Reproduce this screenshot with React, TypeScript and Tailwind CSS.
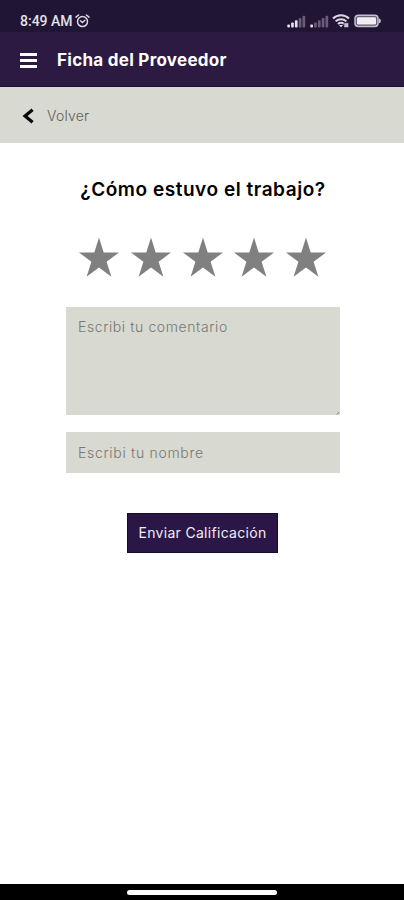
import { useState } from 'react';

const STARS = [1, 2, 3, 4, 5];

function SignalIcon({ active }: { active: number }) {
  return (
    <svg width="19" height="13" viewBox="0 0 19 13">
      {[0, 1, 2, 3, 4].map((i) => (
        <rect
          key={i}
          x={0.3 + i * 3.8}
          y={9.6 - i * 2.2}
          width="2.7"
          height={2.9 + i * 2.2}
          rx="0.9"
          fill={i < active ? '#e6e2ea' : '#6a5d79'}
        />
      ))}
    </svg>
  );
}

function AlarmIcon() {
  return (
    <svg
      width="15"
      height="14"
      viewBox="0 0 15 14"
      fill="none"
      stroke="#ddd8e2"
      strokeWidth="1.5"
      strokeLinecap="round"
    >
      <circle cx="7.5" cy="7.6" r="5" />
      <path d="M1 3.1 3.6 1M14 3.1 11.4 1" />
      <path d="M5.4 6.7 7.4 8.5 9.9 6.2" strokeWidth="1.3" />
    </svg>
  );
}

function WifiIcon() {
  return (
    <svg width="18" height="14" viewBox="0 0 18 14" fill="none" stroke="#ddd8e2">
      <path d="M1 4.6C5.5.2 12.5.2 17 4.6" strokeWidth="2.1" />
      <path d="M3.6 7.4c3-2.9 7.8-2.9 10.8 0" strokeWidth="2" />
      <path d="M6 10c1.7-1.6 4.3-1.6 6 0" strokeWidth="2" />
      <path d="M7 11h4L9 13.6z" fill="#ddd8e2" stroke="none" />
      <path d="M12 8.8h4.6v4.7H12z" fill="#c9c2d0" stroke="#20153a" strokeWidth=".5" />
    </svg>
  );
}

function BatteryIcon() {
  return (
    <svg width="28" height="14" viewBox="0 0 28 14">
      <rect x="1" y="1.2" width="23" height="11.2" rx="3.2" fill="#6a5d79" stroke="#c4bdcb" strokeWidth="1.5" />
      <rect x="3" y="3.2" width="19" height="7.2" rx="1.2" fill="#f0eef2" />
      <path d="M24.8 4.2c2.8.8 2.8 4.4 0 5.2z" fill="#c4bdcb" />
    </svg>
  );
}

export default function App() {
  const [rating, setRating] = useState(0);
  const [comment, setComment] = useState('');
  const [name, setName] = useState('');

  return (
    <div className="flex h-[900px] w-full flex-col bg-white font-[Inter,sans-serif]">
      <div className="flex h-8 shrink-0 items-center justify-between bg-[#201534] pt-[10px] pr-[22px] pl-5">
        <div className="flex items-center gap-[2px]">
          <span className="w-[53px] font-[Roboto,sans-serif] text-[14px] leading-none font-medium whitespace-nowrap text-[#e4e0e8]">
            8:49 AM
          </span>
          <AlarmIcon />
        </div>
        <div className="flex items-center">
          <SignalIcon active={3} />
          <span className="w-[4px]" />
          <SignalIcon active={1} />
          <span className="w-[3px]" />
          <WifiIcon />
          <span className="w-[4px]" />
          <BatteryIcon />
        </div>
      </div>

      <header className="flex h-[55px] shrink-0 items-center border-b border-[#1a0d3a] bg-[#2c1a42] pt-[2px] pl-5">
        <button className="flex w-[17px] flex-col gap-[3px]">
          <span className="h-[3px] w-full bg-white" />
          <span className="h-[3px] w-full bg-white" />
          <span className="h-[3px] w-full bg-white" />
        </button>
        <h1 className="ml-5 text-[17px] leading-5 font-bold tracking-[0.28px] whitespace-nowrap text-white">
          Ficha del Proveedor
        </h1>
      </header>

      <div className="flex h-14 shrink-0 items-center bg-[#d8d9d0] pt-px pl-[22px]">
        <svg width="12" height="16" viewBox="0 0 12 16" fill="none" stroke="#080808" strokeWidth="3.2">
          <path d="M10.6 1.7 3 8l7.6 6.3" />
        </svg>
        <span className="ml-[13px] text-[14px] leading-none font-light tracking-[0.2px] text-[#5e5f5a]">
          Volver
        </span>
      </div>

      <main className="flex flex-1 flex-col items-center pl-[2px]">
        <h2 className="mt-[37px] text-[19px] leading-5 font-semibold tracking-[0.54px] whitespace-nowrap text-black">
          ¿Cómo estuvo el trabajo?
        </h2>

        <div className="mt-[37px] mr-px flex gap-[11.7px]">
          {STARS.map((n) => (
            <button key={n} onClick={() => setRating(n)}>
              <svg
                width="40"
                height="40"
                viewBox="0 0 40 40"
                className={n <= rating ? 'fill-[#2c1a42]' : 'fill-[#808080]'}
              >
                <path d="M20 0.5 24.7 15.5H40L27.6 24.8 32.4 39.8 20 30.6 7.6 39.8 12.4 24.8 0 15.5H15.3Z" />
              </svg>
            </button>
          ))}
        </div>

        <div className="relative mt-[30px] h-[108px] w-[274px]">
          <textarea
            className="block h-full w-full resize-none bg-[#d8d9d0] px-3 py-[10px] text-[14px] leading-5 font-light tracking-[0.6px] outline-none placeholder:text-[#777873]"
            placeholder="Escribi tu comentario"
            value={comment}
            onChange={(e) => setComment(e.target.value)}
          />
          <svg className="absolute right-0 bottom-0" width="4" height="4" viewBox="0 0 4 4">
            <path d="M0.8 3.4 3.4 0.8" stroke="#7c7d78" />
          </svg>
        </div>

        <input
          className="mt-[17px] h-[41px] w-[274px] bg-[#d8d9d0] px-3 text-[14px] font-light tracking-[0.7px] outline-none placeholder:text-[#777873]"
          placeholder="Escribi tu nombre"
          value={name}
          onChange={(e) => setName(e.target.value)}
        />

        <button className="mt-10 mr-px h-10 w-[151px] border border-[#170a31] bg-[#2a1647] text-[14px] leading-none tracking-[0.3px] whitespace-nowrap text-[#f0edf3]">
          Enviar Calificación
        </button>
      </main>

      <div className="flex h-4 shrink-0 justify-center bg-black pt-[6px]">
        <span className="h-[5px] w-[150px] rounded-full bg-white" />
      </div>
    </div>
  );
}
